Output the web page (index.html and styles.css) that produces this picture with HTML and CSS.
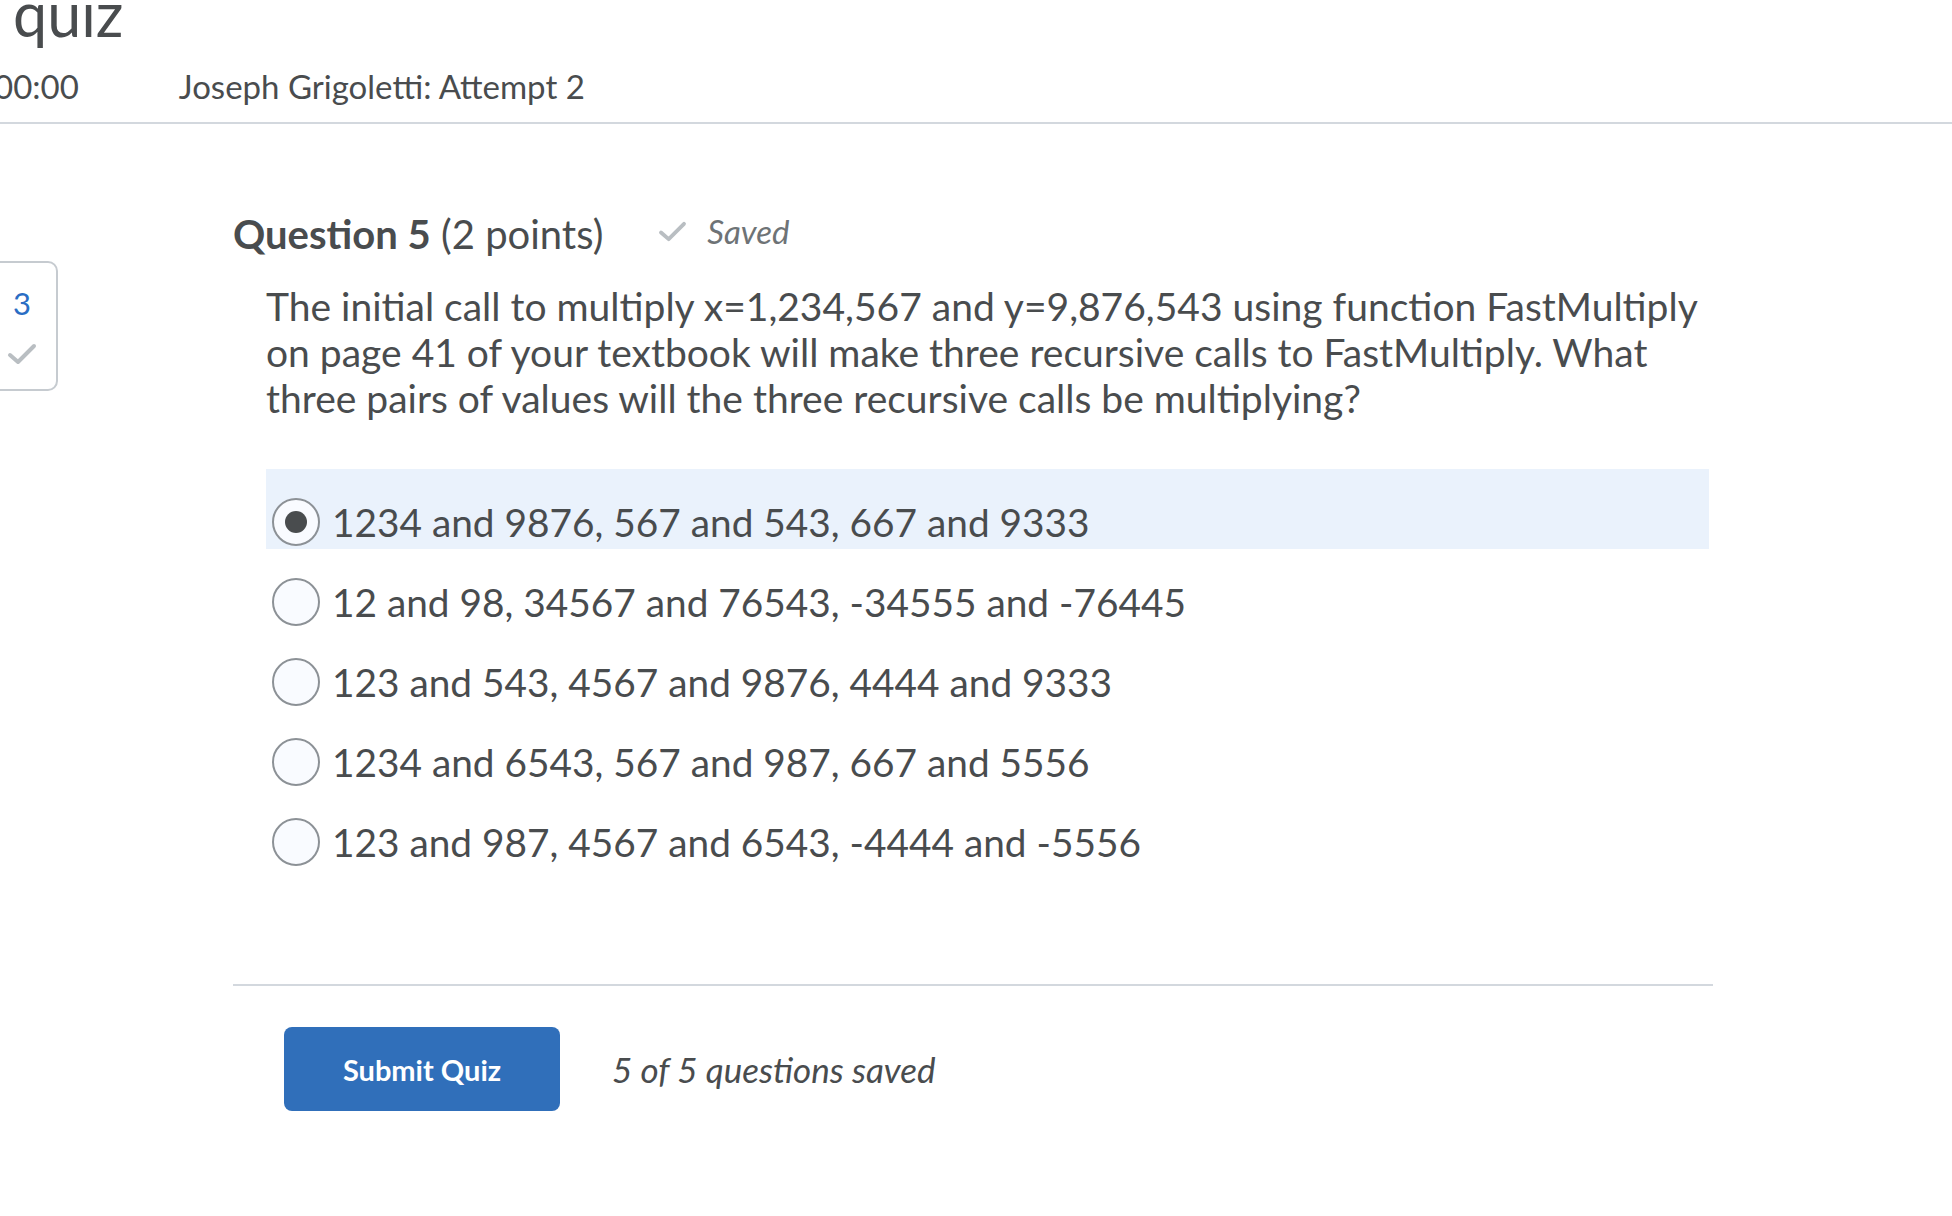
FILE: index.html
```html
<!DOCTYPE html>
<html lang="en">
<head>
<meta charset="utf-8">
<title>quiz</title>
<link rel="stylesheet" href="styles.css">
</head>
<body>
<header class="top">
  <h1 class="title">quiz</h1>
  <div class="meta">
    <span class="timer">00:00</span>
    <span class="attempt">Joseph Grigoletti: Attempt 2</span>
  </div>
</header>
<div class="page">
  <aside class="sidebar">
    <div class="qcard">
      <span class="qnum">3</span>
      <svg class="qcheck" viewBox="0 0 30 24" width="30" height="24"><path d="M3 13 L11 20 L27 4" fill="none" stroke="#b9bec2" stroke-width="4" stroke-linecap="round" stroke-linejoin="round"/></svg>
    </div>
  </aside>
  <main class="content">
    <div class="qhead">
      <h2 class="qtitle"><strong>Question 5</strong> (2 points)</h2>
      <span class="saved">
        <svg class="savedcheck" viewBox="0 0 30 24" width="29" height="23"><path d="M3 13 L11 20 L27 4" fill="none" stroke="#b9bec2" stroke-width="4" stroke-linecap="round" stroke-linejoin="round"/></svg>
        <em>Saved</em>
      </span>
    </div>
    <p class="qtext">The initial call to multiply x=1,234,567 and y=9,876,543 using function FastMultiply on page 41 of your textbook will make three recursive calls to FastMultiply. What three pairs of values will the three recursive calls be multiplying?</p>
    <div class="options">
      <label class="opt selected"><span class="radio checked"></span><span class="otext">1234 and 9876, 567 and 543, 667 and 9333</span></label>
      <label class="opt"><span class="radio"></span><span class="otext">12 and 98, 34567 and 76543, -34555 and -76445</span></label>
      <label class="opt"><span class="radio"></span><span class="otext">123 and 543, 4567 and 9876, 4444 and 9333</span></label>
      <label class="opt"><span class="radio"></span><span class="otext">1234 and 6543, 567 and 987, 667 and 5556</span></label>
      <label class="opt"><span class="radio"></span><span class="otext">123 and 987, 4567 and 6543, -4444 and -5556</span></label>
    </div>
    <div class="footer">
      <button class="submit">Submit Quiz</button>
      <span class="status">5 of 5 questions saved</span>
    </div>
  </main>
</div>
</body>
</html>
```

FILE: styles.css
```css
html, body {
  margin: 0;
  padding: 0;
  background: #ffffff;
}
body {
  font-family: Lato, "Noto Sans", sans-serif;
  color: #494c4e;
  width: 1952px;
  height: 1216px;
  overflow: hidden;
}
.top {
  border-bottom: 2px solid #d3d8de;
  padding-top: 1px;
}
.title {
  margin: -18px 0 0 13px;
  font-size: 61px;
  font-weight: 400;
  line-height: 61px;
  color: #494c4e;
}
.meta {
  display: flex;
  gap: 100px;
  margin-left: -6px;
  margin-top: 22px;
  padding-bottom: 16px;
  font-size: 33px;
  line-height: 40px;
}
.page {
  display: flex;
  align-items: flex-start;
}
.sidebar {
  width: 72px;
  margin-left: -14px;
  margin-top: 137px;
  flex: none;
}
.qcard {
  box-sizing: border-box;
  height: 130px;
  border: 2px solid #c6cbd0;
  border-radius: 10px;
  display: flex;
  flex-direction: column;
  align-items: center;
  padding-top: 25px;
  gap: 24px;
}
.qnum {
  font-size: 31px;
  line-height: 30px;
  color: #2a6dc4;
}
.content {
  margin-left: 175px;
  padding-top: 86px;
  width: 1480px;
}
.qhead {
  display: flex;
  align-items: center;
  gap: 55px;
  height: 48px;
}
.qtitle {
  margin: 0;
  font-size: 40px;
  line-height: 48px;
  font-weight: 400;
}
.qtitle strong {
  font-weight: 700;
}
.saved {
  display: flex;
  align-items: center;
  gap: 20px;
  color: #6e7376;
  font-size: 33px;
  line-height: 40px;
  margin-top: -6px;
}
.saved em {
  font-style: italic;
}
.qtext {
  margin: 25px 0 0 33px;
  font-size: 39px;
  line-height: 46px;
  width: 1443px;
}
.options {
  margin: 48px 0 0 33px;
  width: 1443px;
  display: flex;
  flex-direction: column;
}
.opt {
  box-sizing: border-box;
  display: flex;
  align-items: center;
  gap: 12px;
  height: 80px;
  padding: 26px 0 0 6px;
  font-size: 38.8px;
}
.otext {
  line-height: 48px;
}
.opt.selected {
  background: #eaf2fc;
}
.radio {
  box-sizing: border-box;
  width: 48px;
  height: 48px;
  border-radius: 50%;
  border: 2px solid #8c9196;
  background: #f9fbff;
  display: flex;
  align-items: center;
  justify-content: center;
  flex: none;
}
.radio.checked::after {
  content: "";
  width: 22px;
  height: 22px;
  border-radius: 50%;
  background: #494c4e;
}
.footer {
  margin-top: 115px;
  border-top: 2px solid #d3d8de;
  padding: 41px 0 0 51px;
  display: flex;
  align-items: center;
  gap: 52px;
}
.submit {
  width: 276px;
  height: 84px;
  border: none;
  border-radius: 8px;
  background: #306fba;
  color: #ffffff;
  font-family: Lato, "Noto Sans", sans-serif;
  font-weight: 700;
  font-size: 29px;
}
.status {
  font-style: italic;
  font-size: 35px;
}
```
